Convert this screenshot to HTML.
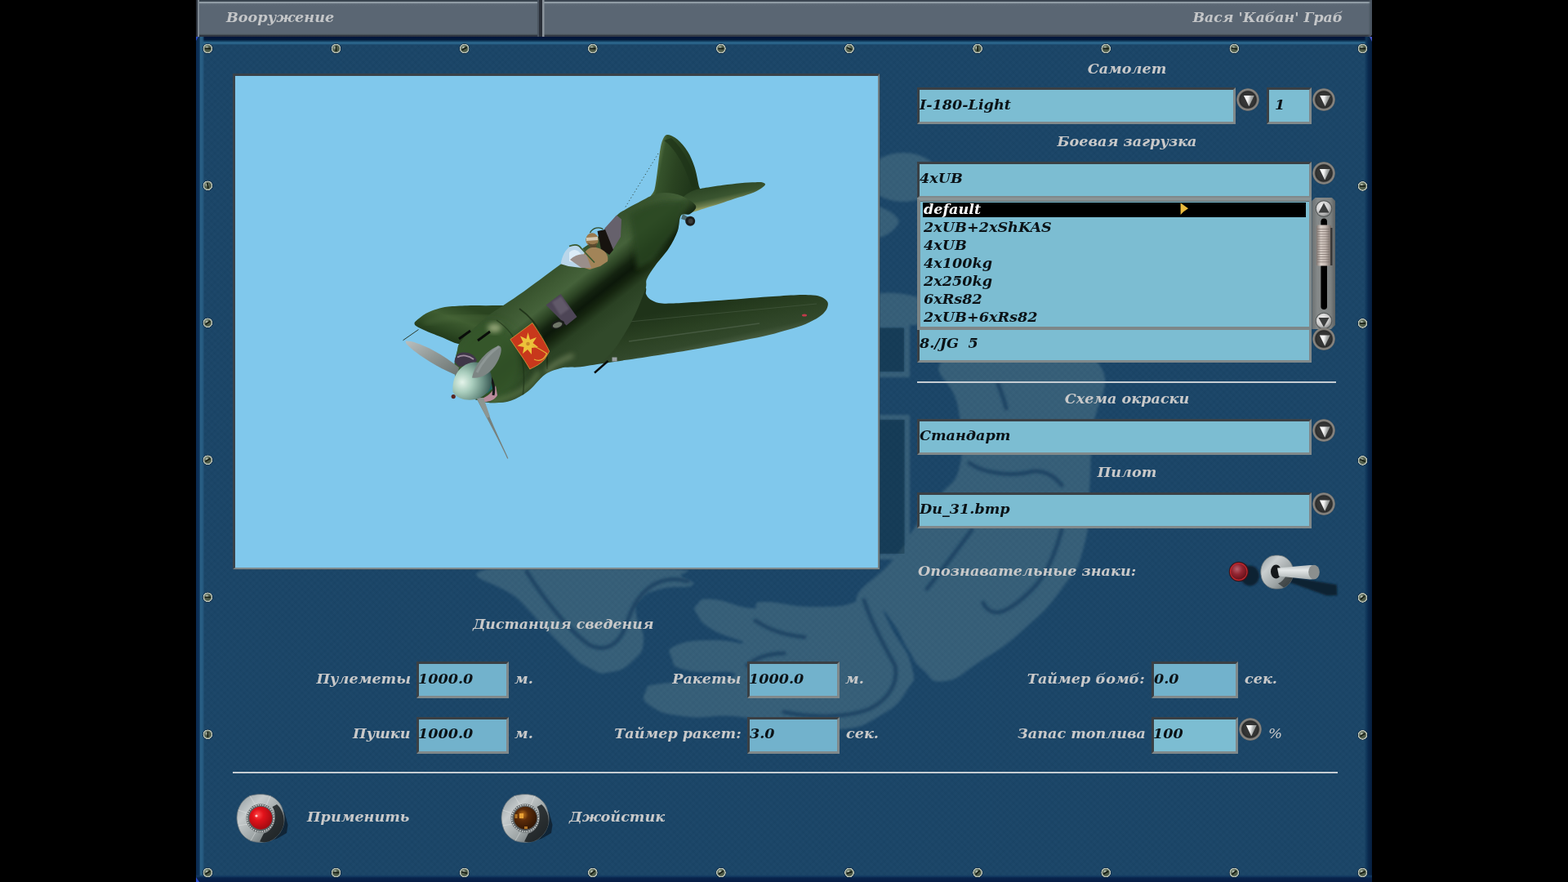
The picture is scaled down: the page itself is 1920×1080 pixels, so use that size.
<!DOCTYPE html>
<html lang="ru">
<head>
<meta charset="utf-8">
<title>Вооружение</title>
<style>
html,body{margin:0;padding:0;background:#000;}
body{width:1920px;height:1080px;position:relative;overflow:hidden;font-family:'DejaVu Serif','Liberation Serif',serif;}
div,svg{position:absolute;box-sizing:border-box;}
.t,.k{font:italic bold 16.6px/30px 'DejaVu Serif','Liberation Serif',serif;white-space:pre;height:30px;transform:scaleX(1.06);transform-origin:0 50%;}
.t{color:#c9c9c9;}
.k{color:#0b1216;}
#panel{left:240px;top:45px;width:1440px;height:1035px;background-color:#1b4668;
 background-image:
  repeating-linear-gradient(45deg,rgba(255,255,255,.008) 0 1.4px,rgba(0,0,0,0) 1.4px 2.8px,rgba(0,0,0,.022) 2.8px 4.2px,rgba(0,0,0,0) 4.2px 5.6px),
  repeating-linear-gradient(-45deg,rgba(255,255,255,.008) 0 1.4px,rgba(0,0,0,0) 1.4px 2.8px,rgba(0,0,0,.022) 2.8px 4.2px,rgba(0,0,0,0) 4.2px 5.6px);
 overflow:hidden;}
.bar{top:0;height:45px;background:linear-gradient(#38434e 0,#38434e 1.6px,#8f9ba4 2.4px,#8f9ba4 3.6px,#6a7682 4.4px,#5d6976 5.5px,#5a6673 8px,#5a6673 40.5px,#566369 42px,#2e3440 43.4px,#2a303c 45px);}
.fld{background:#7cbdd2;border-style:solid;border-width:3px;border-color:#3a4045 #80898b #80898b #3a4045;overflow:hidden;}
.fld .k{left:0;}
.dd{width:28px;height:28px;border-radius:50%;background:radial-gradient(circle at 50% 50%,#3a3a3a 0,#333434 8px,#2a2b2b 10.2px,#6f6d69 11.2px,#8d8a85 12.3px,#7d7b77 13.2px,rgba(70,75,78,.5) 14.2px);}
.dd:after{content:"";position:absolute;left:9.2px;top:9.4px;width:12.8px;height:13.4px;background:linear-gradient(100deg,#fff 0,#f2f2f2 38%,#a9acab 62%,#7b7e7d 100%);clip-path:polygon(0 0,100% 0,50% 100%);}
.hl{height:2.5px;background:#c5ccd2;}
</style>
</head>
<body>
<div id="panel">
<svg id="wm" style="left:0;top:0" width="1440" height="1035" viewBox="240 45 1440 1035">
<defs><filter id="wb" x="-5%" y="-5%" width="110%" height="110%"><feGaussianBlur stdDeviation="1.6"/></filter></defs>
<g fill="#e6ffe4" opacity=".135" filter="url(#wb)">
<path d="M600 696C554.13 706.93 613.73 711.13 638 737C662.27 762.87 668.6 771.4 691 793C713.4 814.6 707.07 810 722 818C736.93 826 732.87 825.4 747 823C761.13 820.6 764.07 819.4 775 809C785.93 798.6 786.93 799.2 788 784C789.07 768.8 779.8 765.33 779 752C778.2 738.67 776.73 742.27 785 734C793.27 725.73 793.47 725.53 810 721C826.53 716.47 840.33 721 847 717C853.67 713 844.87 711.6 835 706C825.13 700.4 872.67 698.67 810 696C747.33 693.33 645.87 685.07 600 696Z"/>
<path d="M853.8 740C858.79 735.01 855.01 732.55 872.5 733.8C889.99 735.05 902.73 743.87 919.4 744.7C936.07 745.53 914.17 737.35 935 736.9C955.83 736.45 967.5 743 997.5 743C1027.5 743 1030.83 742.77 1047.5 736.9C1064.17 731.03 1053.33 722.68 1060 721C1066.67 719.32 1064.23 718.07 1072.5 730.6C1080.77 743.13 1079.4 745.49 1091 768C1102.6 790.51 1110.93 794.2 1116 815C1121.07 835.8 1120.77 829.33 1110 846C1099.23 862.67 1097.25 864.97 1075.6 877.5C1053.95 890.03 1058.03 889.67 1028.8 893C999.57 896.33 999.33 894.13 966 890C932.67 885.87 937.13 880.83 903.8 877.5C870.47 874.17 869.35 880.83 841 877.5C812.65 874.17 810.83 873.4 797.5 865C784.17 856.6 787.67 853.47 791 846C794.33 838.53 788.27 840.25 810 837C831.73 833.75 849.17 837.27 872.5 833.8C895.83 830.33 905.9 827.41 897.5 824C889.1 820.59 861 825.91 841 821C821 816.09 825.75 813.87 822.5 805.6C819.25 797.33 815.47 795.81 828.8 790C842.13 784.19 850.85 784.6 872.5 783.8C894.15 783 910 790.41 910 787C910 783.59 887.49 780.2 872.5 771C857.51 761.8 858.79 760.77 853.8 752.5C848.81 744.23 848.81 744.99 853.8 740Z"/>
<path d="M1156 440C1176.53 421.87 1199.87 428.93 1250 430C1300.13 431.07 1320.8 416.53 1344 444C1367.2 471.47 1339.67 491.13 1337 533C1334.33 574.87 1336.67 564.47 1334 601C1331.33 637.53 1336.07 638 1327 670C1317.93 702 1320 693.8 1300 721C1280 748.2 1278.67 748.27 1252 772C1225.33 795.73 1225.33 793.47 1200 810C1174.67 826.53 1175.67 831.33 1157 834C1138.33 836.67 1142 830.4 1130 820C1118 809.6 1121.33 809.67 1112 795C1102.67 780.33 1104.87 779.13 1095 765C1085.13 750.87 1087.27 751.07 1075 742C1062.73 732.93 1043.93 746.2 1049 731C1054.07 715.8 1074 709.27 1094 685C1114 660.73 1109.07 660.53 1124 640C1138.93 619.47 1136.13 627.47 1150 608C1163.87 588.53 1169.87 596.33 1176 567C1182.13 537.67 1178.33 531.87 1173 498C1167.67 464.13 1135.47 458.13 1156 440Z"/>
<ellipse cx="1106" cy="217" rx="44" ry="30"/>
<path d="M1060 250 C1080 252 1096 260 1101 271 C1096 284 1082 292 1060 295Z"/>
<path d="M1060 362 C1085 356 1105 358 1124 364 L1124 398 L1060 398Z"/>
<path fill-rule="evenodd" d="M1060 396 L1114 396 L1114 462 L1060 462Z M1060 401.5 L1107 401.5 L1107 455 L1060 455Z"/>
<path fill-rule="evenodd" d="M1060 508 L1114 508 L1114 685 L1060 685Z M1060 514 L1107.5 514 L1107.5 678 L1060 678Z"/>
</g>
<path d="M1060 401.5 L1107 401.5 L1107 455 L1060 455Z M1060 514 L1107.5 514 L1107.5 678 L1060 678Z" fill="#0c2c3c" opacity=".38"/>
<g fill="none" stroke="#143c5e" stroke-width="5" opacity=".75" stroke-linecap="round" filter="url(#wb)">
<path d="M1187 567 C1205 580 1240 584 1265 577 C1280 576 1292 584 1300 594"/>
<path d="M1222 470 C1226 480 1230 490 1232 500"/>
<path d="M1190 649 C1180 662 1160 690 1135 721"/>
<path d="M1300 649 C1294 670 1286 695 1270 715 C1255 732 1235 748 1222 750 C1212 750 1206 744 1204 738"/>
<path d="M645 700 C670 740 700 775 722 790 C740 798 755 792 765 770 C772 750 778 730 800 716 C815 708 830 708 842 712"/>
<path d="M925 760 C940 770 960 778 985 780 M915 815 C925 806 940 800 960 800"/>
<path d="M1058 735 C1066 760 1082 790 1096 815 C1100 835 1090 855 1065 868 C1040 878 1000 880 960 872"/>
</g>
</svg>
<div style="left:0;top:0;width:1440px;height:10px;background:linear-gradient(#02143c 0,#031c3c 3.6px,#174568 5.6px,#2e6a90 7.4px,#245a80 9px,rgba(27,70,104,0) 10px);"></div>
<div style="left:0;top:0;width:11px;height:1035px;background:linear-gradient(90deg,#0a2a50 0,#0e3359 4px,#2a6085 5.5px,#265b81 8px,rgba(27,70,104,0) 10.5px);"></div>
<div style="right:0;top:0;width:9px;height:1035px;background:linear-gradient(270deg,#061e3e 0,#0a2a4e 4.5px,#11385c 7px,rgba(27,70,104,0) 9.5px);"></div>
<div style="left:0;bottom:0;width:1440px;height:9px;background:linear-gradient(0deg,#061c44 0,#08244c 5px,#123a62 7px,rgba(27,70,104,0) 9px);"></div>
<div style="left:0;bottom:0;width:4px;height:6px;background:#2a4ccc;clip-path:polygon(0 0,100% 100%,0 100%);z-index:2"></div>
<div style="left:0;top:0;width:3px;height:5px;background:#2a48c4;clip-path:polygon(0 0,100% 0,0 100%);z-index:2"></div>
<div style="right:0;top:0;width:3px;height:6px;background:#4a5ad0;clip-path:polygon(0 0,100% 0,100% 100%);z-index:2"></div>
</div>
<div class="bar" style="left:240px;top:0px;width:424px;height:45px;border-left:2px solid #2c333c;border-right:4px solid #2a3039;box-shadow:inset 2px 0 0 #7d8790,inset -2px 0 1px #4a5460;"></div>
<div class="bar" style="left:663.5px;top:0px;width:1016.5px;height:45px;box-shadow:inset 2.5px 0 0 #8a939b, inset -3px 0 2px #4a5460;border-radius:0 0 4px 0;"></div>
<div class="t" style="left:276.5px;top:6px;color:#c4c6c8;">Вооружение</div>
<div class="t" style="right:276px;transform-origin:100% 50%;top:6px;color:#c4c6c8;transform:scaleX(1.043);">Вася 'Кабан' Граб</div>
<svg id="screws" style="left:240px;top:45px" width="1440" height="1035" viewBox="240 45 1440 1035">
<defs><radialGradient id="sc1" cx=".5" cy=".5" r=".5"><stop offset="0" stop-color="#56644f"/><stop offset=".5" stop-color="#4a5745"/><stop offset=".62" stop-color="#7d8976"/><stop offset=".74" stop-color="#c4ccc2"/><stop offset=".8" stop-color="#b5beb3"/><stop offset=".86" stop-color="#0a2038" stop-opacity=".7"/><stop offset="1" stop-color="#0a2038" stop-opacity="0"/></radialGradient><radialGradient id="sc2" cx=".5" cy=".5" r=".5"><stop offset="0" stop-color="#e2e9e0" stop-opacity=".95"/><stop offset=".5" stop-color="#a9b5a6" stop-opacity=".55"/><stop offset="1" stop-color="#6a7766" stop-opacity="0"/></radialGradient></defs>
<g transform="translate(254.4 59.5)"><circle r="7" fill="url(#sc1)"/><circle cx="-1.1" cy="-1.2" r="3.4" fill="url(#sc2)"/><rect x="-3.6" y="-.9" width="7.2" height="1.8" rx=".8" fill="#161d15" transform="rotate(0)"/></g>
<g transform="translate(254.4 1068.5)"><circle r="7" fill="url(#sc1)"/><circle cx="-1.1" cy="-1.2" r="3.4" fill="url(#sc2)"/><rect x="-3.6" y="-.9" width="7.2" height="1.8" rx=".8" fill="#161d15" transform="rotate(-35)"/></g>
<g transform="translate(411.52 59.5)"><circle r="7" fill="url(#sc1)"/><circle cx="-1.1" cy="-1.2" r="3.4" fill="url(#sc2)"/><rect x="-3.6" y="-.9" width="7.2" height="1.8" rx=".8" fill="#161d15" transform="rotate(90)"/></g>
<g transform="translate(411.52 1068.5)"><circle r="7" fill="url(#sc1)"/><circle cx="-1.1" cy="-1.2" r="3.4" fill="url(#sc2)"/><rect x="-3.6" y="-.9" width="7.2" height="1.8" rx=".8" fill="#161d15" transform="rotate(0)"/></g>
<g transform="translate(568.64 59.5)"><circle r="7" fill="url(#sc1)"/><circle cx="-1.1" cy="-1.2" r="3.4" fill="url(#sc2)"/><rect x="-3.6" y="-.9" width="7.2" height="1.8" rx=".8" fill="#161d15" transform="rotate(-30)"/></g>
<g transform="translate(568.64 1068.5)"><circle r="7" fill="url(#sc1)"/><circle cx="-1.1" cy="-1.2" r="3.4" fill="url(#sc2)"/><rect x="-3.6" y="-.9" width="7.2" height="1.8" rx=".8" fill="#161d15" transform="rotate(15)"/></g>
<g transform="translate(725.76 59.5)"><circle r="7" fill="url(#sc1)"/><circle cx="-1.1" cy="-1.2" r="3.4" fill="url(#sc2)"/><rect x="-3.6" y="-.9" width="7.2" height="1.8" rx=".8" fill="#161d15" transform="rotate(0)"/></g>
<g transform="translate(725.76 1068.5)"><circle r="7" fill="url(#sc1)"/><circle cx="-1.1" cy="-1.2" r="3.4" fill="url(#sc2)"/><rect x="-3.6" y="-.9" width="7.2" height="1.8" rx=".8" fill="#161d15" transform="rotate(-40)"/></g>
<g transform="translate(882.88 59.5)"><circle r="7" fill="url(#sc1)"/><circle cx="-1.1" cy="-1.2" r="3.4" fill="url(#sc2)"/><rect x="-3.6" y="-.9" width="7.2" height="1.8" rx=".8" fill="#161d15" transform="rotate(0)"/></g>
<g transform="translate(882.88 1068.5)"><circle r="7" fill="url(#sc1)"/><circle cx="-1.1" cy="-1.2" r="3.4" fill="url(#sc2)"/><rect x="-3.6" y="-.9" width="7.2" height="1.8" rx=".8" fill="#161d15" transform="rotate(-35)"/></g>
<g transform="translate(1040 59.5)"><circle r="7" fill="url(#sc1)"/><circle cx="-1.1" cy="-1.2" r="3.4" fill="url(#sc2)"/><rect x="-3.6" y="-.9" width="7.2" height="1.8" rx=".8" fill="#161d15" transform="rotate(25)"/></g>
<g transform="translate(1040 1068.5)"><circle r="7" fill="url(#sc1)"/><circle cx="-1.1" cy="-1.2" r="3.4" fill="url(#sc2)"/><rect x="-3.6" y="-.9" width="7.2" height="1.8" rx=".8" fill="#161d15" transform="rotate(-20)"/></g>
<g transform="translate(1197.12 59.5)"><circle r="7" fill="url(#sc1)"/><circle cx="-1.1" cy="-1.2" r="3.4" fill="url(#sc2)"/><rect x="-3.6" y="-.9" width="7.2" height="1.8" rx=".8" fill="#161d15" transform="rotate(90)"/></g>
<g transform="translate(1197.12 1068.5)"><circle r="7" fill="url(#sc1)"/><circle cx="-1.1" cy="-1.2" r="3.4" fill="url(#sc2)"/><rect x="-3.6" y="-.9" width="7.2" height="1.8" rx=".8" fill="#161d15" transform="rotate(-45)"/></g>
<g transform="translate(1354.24 59.5)"><circle r="7" fill="url(#sc1)"/><circle cx="-1.1" cy="-1.2" r="3.4" fill="url(#sc2)"/><rect x="-3.6" y="-.9" width="7.2" height="1.8" rx=".8" fill="#161d15" transform="rotate(0)"/></g>
<g transform="translate(1354.24 1068.5)"><circle r="7" fill="url(#sc1)"/><circle cx="-1.1" cy="-1.2" r="3.4" fill="url(#sc2)"/><rect x="-3.6" y="-.9" width="7.2" height="1.8" rx=".8" fill="#161d15" transform="rotate(-30)"/></g>
<g transform="translate(1511.36 59.5)"><circle r="7" fill="url(#sc1)"/><circle cx="-1.1" cy="-1.2" r="3.4" fill="url(#sc2)"/><rect x="-3.6" y="-.9" width="7.2" height="1.8" rx=".8" fill="#161d15" transform="rotate(10)"/></g>
<g transform="translate(1511.36 1068.5)"><circle r="7" fill="url(#sc1)"/><circle cx="-1.1" cy="-1.2" r="3.4" fill="url(#sc2)"/><rect x="-3.6" y="-.9" width="7.2" height="1.8" rx=".8" fill="#161d15" transform="rotate(-38)"/></g>
<g transform="translate(1668.48 59.5)"><circle r="7" fill="url(#sc1)"/><circle cx="-1.1" cy="-1.2" r="3.4" fill="url(#sc2)"/><rect x="-3.6" y="-.9" width="7.2" height="1.8" rx=".8" fill="#161d15" transform="rotate(0)"/></g>
<g transform="translate(1668.48 1068.5)"><circle r="7" fill="url(#sc1)"/><circle cx="-1.1" cy="-1.2" r="3.4" fill="url(#sc2)"/><rect x="-3.6" y="-.9" width="7.2" height="1.8" rx=".8" fill="#161d15" transform="rotate(-25)"/></g>
<g transform="translate(254.4 227.3)"><circle r="7" fill="url(#sc1)"/><circle cx="-1.1" cy="-1.2" r="3.4" fill="url(#sc2)"/><rect x="-3.6" y="-.9" width="7.2" height="1.8" rx=".8" fill="#161d15" transform="rotate(80)"/></g>
<g transform="translate(1668.5 227.9)"><circle r="7" fill="url(#sc1)"/><circle cx="-1.1" cy="-1.2" r="3.4" fill="url(#sc2)"/><rect x="-3.6" y="-.9" width="7.2" height="1.8" rx=".8" fill="#161d15" transform="rotate(0)"/></g>
<g transform="translate(254.4 395.3)"><circle r="7" fill="url(#sc1)"/><circle cx="-1.1" cy="-1.2" r="3.4" fill="url(#sc2)"/><rect x="-3.6" y="-.9" width="7.2" height="1.8" rx=".8" fill="#161d15" transform="rotate(-35)"/></g>
<g transform="translate(1668.5 395.9)"><circle r="7" fill="url(#sc1)"/><circle cx="-1.1" cy="-1.2" r="3.4" fill="url(#sc2)"/><rect x="-3.6" y="-.9" width="7.2" height="1.8" rx=".8" fill="#161d15" transform="rotate(0)"/></g>
<g transform="translate(254.4 563.3)"><circle r="7" fill="url(#sc1)"/><circle cx="-1.1" cy="-1.2" r="3.4" fill="url(#sc2)"/><rect x="-3.6" y="-.9" width="7.2" height="1.8" rx=".8" fill="#161d15" transform="rotate(-30)"/></g>
<g transform="translate(1668.5 563.9)"><circle r="7" fill="url(#sc1)"/><circle cx="-1.1" cy="-1.2" r="3.4" fill="url(#sc2)"/><rect x="-3.6" y="-.9" width="7.2" height="1.8" rx=".8" fill="#161d15" transform="rotate(20)"/></g>
<g transform="translate(254.4 731.3)"><circle r="7" fill="url(#sc1)"/><circle cx="-1.1" cy="-1.2" r="3.4" fill="url(#sc2)"/><rect x="-3.6" y="-.9" width="7.2" height="1.8" rx=".8" fill="#161d15" transform="rotate(0)"/></g>
<g transform="translate(1668.5 731.9)"><circle r="7" fill="url(#sc1)"/><circle cx="-1.1" cy="-1.2" r="3.4" fill="url(#sc2)"/><rect x="-3.6" y="-.9" width="7.2" height="1.8" rx=".8" fill="#161d15" transform="rotate(-40)"/></g>
<g transform="translate(254.4 899.3)"><circle r="7" fill="url(#sc1)"/><circle cx="-1.1" cy="-1.2" r="3.4" fill="url(#sc2)"/><rect x="-3.6" y="-.9" width="7.2" height="1.8" rx=".8" fill="#161d15" transform="rotate(90)"/></g>
<g transform="translate(1668.5 899.9)"><circle r="7" fill="url(#sc1)"/><circle cx="-1.1" cy="-1.2" r="3.4" fill="url(#sc2)"/><rect x="-3.6" y="-.9" width="7.2" height="1.8" rx=".8" fill="#161d15" transform="rotate(-30)"/></g>
</svg>
<div style="left:285px;top:90px;width:792px;height:607px;background:#80c8ec;border-style:solid;border-width:3px 2px 2px 3px;border-color:#39424a #6f7d81 #7e8a8d #39424a;box-shadow:1px 1px 0 rgba(60,75,85,.45);"></div>
<svg id="plane" style="left:288px;top:93px" width="787" height="602" viewBox="288 93 787 602">
<defs>
<filter id="b1" x="-30%" y="-30%" width="160%" height="160%"><feGaussianBlur stdDeviation="1.2"/></filter>
<filter id="b3" x="-30%" y="-30%" width="160%" height="160%"><feGaussianBlur stdDeviation="3"/></filter>
<filter id="b6" x="-40%" y="-40%" width="180%" height="180%"><feGaussianBlur stdDeviation="6"/></filter>
<linearGradient id="gfus" gradientUnits="userSpaceOnUse" x1="668" y1="335" x2="730" y2="414"><stop offset="0" stop-color="#36512c"/><stop offset=".15" stop-color="#3e5a33"/><stop offset=".3" stop-color="#45623a"/><stop offset=".42" stop-color="#2c4424"/><stop offset=".52" stop-color="#142310"/><stop offset=".6" stop-color="#0c180a"/><stop offset=".68" stop-color="#15250f"/><stop offset=".8" stop-color="#2a4123"/><stop offset="1" stop-color="#31492a"/></linearGradient>
<linearGradient id="grw" gradientUnits="userSpaceOnUse" x1="900" y1="362" x2="912" y2="418"><stop offset="0" stop-color="#1f3319"/><stop offset=".45" stop-color="#2a4022"/><stop offset=".82" stop-color="#32482b"/><stop offset="1" stop-color="#485d41"/></linearGradient>
<linearGradient id="glw" gradientUnits="userSpaceOnUse" x1="560" y1="372" x2="545" y2="415"><stop offset="0" stop-color="#2a4420"/><stop offset=".4" stop-color="#3f5d31"/><stop offset=".75" stop-color="#2e4a24"/><stop offset="1" stop-color="#223a1a"/></linearGradient>
<linearGradient id="gfin" gradientUnits="userSpaceOnUse" x1="802" y1="205" x2="852" y2="215"><stop offset="0" stop-color="#5d7a4a"/><stop offset=".15" stop-color="#35522b"/><stop offset=".5" stop-color="#2a4321"/><stop offset="1" stop-color="#1f3519"/></linearGradient>
<linearGradient id="gst" gradientUnits="userSpaceOnUse" x1="885" y1="225" x2="890" y2="249"><stop offset="0" stop-color="#2c4524"/><stop offset=".6" stop-color="#3a5530"/><stop offset=".9" stop-color="#6d7f4f"/><stop offset="1" stop-color="#8f9a5e"/></linearGradient>
<radialGradient id="gsp" gradientUnits="userSpaceOnUse" cx="566" cy="468" r="36"><stop offset="0" stop-color="#e4f4ea"/><stop offset=".35" stop-color="#a9cdbd"/><stop offset=".7" stop-color="#6f9488"/><stop offset="1" stop-color="#3a5a55"/></radialGradient>
<linearGradient id="gbl" x1="0" y1="0" x2="1" y2="1"><stop offset="0" stop-color="#b9bfbf"/><stop offset=".5" stop-color="#8e9694"/><stop offset="1" stop-color="#6a726f"/></linearGradient>
<clipPath id="cfus"><path d="M560 429C561.08 424.33 560.5 423.67 563 420C565.5 416.33 569.5 412.33 575 407C580.5 401.67 589 393.58 596 388C603 382.42 609.38 378.72 617 373.5C624.62 368.28 633.42 362.57 641.7 356.7C649.98 350.83 659.2 343.83 666.7 338.3C674.2 332.77 680.32 328.22 686.7 323.5C693.08 318.78 698.62 314.58 705 310C711.38 305.42 719.17 300.67 725 296C730.83 291.33 735 287.33 740 282C745 276.67 750.55 268.33 755 264C759.45 259.67 762.25 258.67 766.7 256C771.15 253.33 776.08 250.92 781.7 248C787.32 245.08 794.85 240.5 800.4 238.5C805.95 236.5 809.23 235.75 815 236C820.77 236.25 828.83 237.33 835 240C841.17 242.67 850.33 248.33 852 252C853.67 255.67 848.03 260 845 262C841.97 264 836.37 260.45 833.8 264C831.23 267.55 832.07 276.63 829.6 283.3C827.13 289.97 823.52 297.05 819 304C814.48 310.95 807 318.72 802.5 325C798 331.28 794.17 336.48 792 341.7C789.83 346.92 793.17 346.58 789.5 356.3C785.83 366.02 778.25 386.05 770 400C761.75 413.95 751.67 431.83 740 440C728.33 448.17 708.67 447.25 700 449C691.33 450.75 693.42 448.92 688 450.5C682.58 452.08 674.38 453.75 667.5 458.5C660.62 463.25 653.65 473.67 646.7 479C639.75 484.33 632.58 488.13 625.8 490.5C619.02 492.87 611.97 493.03 606 493.2C600.03 493.37 595.67 493.03 590 491.5C584.33 489.97 577 487.92 572 484C567 480.08 562.58 474 560 468C557.42 462 556.5 454.5 556.5 448C556.5 441.5 558.92 433.67 560 429Z"/></clipPath>
<clipPath id="crw"><path d="M789.6 352C793.1 352.83 789.93 357.58 791 360C792.07 362.42 793.38 364.67 796 366.5C798.62 368.33 802.33 370.15 806.7 371C811.07 371.85 815.32 371.77 822.2 371.6C829.08 371.43 839.1 370.57 848 370C856.9 369.43 865.27 368.92 875.6 368.2C885.93 367.48 898.9 366.52 910 365.7C921.1 364.88 931.27 364.05 942.2 363.3C953.13 362.55 966.7 361.48 975.6 361.2C984.5 360.92 990.53 361.17 995.6 361.6C1000.67 362.03 1003.18 362.65 1006 363.8C1008.82 364.95 1011.2 366.88 1012.5 368.5C1013.8 370.12 1014.05 371.5 1013.8 373.5C1013.55 375.5 1012.8 378.08 1011 380.5C1009.2 382.92 1007.05 385.3 1003 388C998.95 390.7 993.03 394.07 986.7 396.7C980.37 399.33 972.42 401.58 965 403.8C957.58 406.02 951.37 407.83 942.2 410C933.03 412.17 921.1 414.58 910 416.8C898.9 419.02 887.27 421.18 875.6 423.3C863.93 425.42 851.12 427.65 840 429.5C828.88 431.35 821.5 432.47 808.9 434.4C796.3 436.33 776.72 439.25 764.4 441.1C752.08 442.95 745.73 444.1 735 445.5C724.27 446.9 709.17 450.42 700 449.5C690.83 448.58 680 448.25 680 440C680 431.75 690 411.67 700 400C710 388.33 728.33 377.5 740 370C751.67 362.5 761.73 358 770 355C778.27 352 786.1 351.17 789.6 352Z"/></clipPath>
</defs>
<path d="M806 188 L765.5 254" stroke="#26331f" stroke-width="1" stroke-dasharray="1 3.2" fill="none"/>
<path d="M493.5 416.7 L512.5 403.5" stroke="#2a3a2a" stroke-width="1" fill="none"/>
<path d="M836 262 L843 266 L840 270 L834 268Z" fill="#4a6a70"/><circle cx="845.2" cy="270.8" r="6" fill="#1b1d1c"/><circle cx="845.6" cy="270.8" r="3" fill="#3a3d3c"/>
<path d="M797 243C794.75 240 800.23 237.08 801.5 232C802.77 226.92 803.4 220.92 804.6 212.5C805.8 204.08 807.33 188.83 808.7 181.5C810.07 174.17 811.25 171.25 812.8 168.5C814.35 165.75 815.2 164.62 818 165C820.8 165.38 825.6 167.4 829.6 170.8C833.6 174.2 838.53 179.83 842 185.4C845.47 190.97 848.13 197.27 850.4 204.2C852.67 211.13 854.5 221.7 855.6 227C856.7 232.3 859.6 232.17 857 236C854.4 239.83 847 247.67 840 250C833 252.33 822.17 251.17 815 250C807.83 248.83 799.25 246 797 243Z" fill="url(#gfin)"/>
<path d="M813 172 C825 180 838 200 847 229 L853 228 C848 204 838 184 822 169Z" fill="#1e3318" opacity=".7"/>
<path d="M838 240C841.33 236.83 846 234.62 850 233C854 231.38 856.17 231.33 862 230.3C867.83 229.27 877.55 227.82 885 226.8C892.45 225.78 900.03 224.8 906.7 224.2C913.37 223.6 920.45 223.32 925 223.2C929.55 223.08 932 223.03 934 223.5C936 223.97 937.17 224.92 937 226C936.83 227.08 935.28 228.43 933 230C930.72 231.57 927.97 233.47 923.3 235.4C918.63 237.33 911.25 239.52 905 241.6C898.75 243.68 891.97 245.92 885.8 247.9C879.63 249.88 873.55 251.73 868 253.5C862.45 255.27 857.17 257.08 852.5 258.5C847.83 259.92 843.42 261.58 840 262C836.58 262.42 833.67 262.67 832 261C830.33 259.33 829 255.5 830 252C831 248.5 834.67 243.17 838 240Z" fill="url(#gst)"/>
<path d="M789.6 352C793.1 352.83 789.93 357.58 791 360C792.07 362.42 793.38 364.67 796 366.5C798.62 368.33 802.33 370.15 806.7 371C811.07 371.85 815.32 371.77 822.2 371.6C829.08 371.43 839.1 370.57 848 370C856.9 369.43 865.27 368.92 875.6 368.2C885.93 367.48 898.9 366.52 910 365.7C921.1 364.88 931.27 364.05 942.2 363.3C953.13 362.55 966.7 361.48 975.6 361.2C984.5 360.92 990.53 361.17 995.6 361.6C1000.67 362.03 1003.18 362.65 1006 363.8C1008.82 364.95 1011.2 366.88 1012.5 368.5C1013.8 370.12 1014.05 371.5 1013.8 373.5C1013.55 375.5 1012.8 378.08 1011 380.5C1009.2 382.92 1007.05 385.3 1003 388C998.95 390.7 993.03 394.07 986.7 396.7C980.37 399.33 972.42 401.58 965 403.8C957.58 406.02 951.37 407.83 942.2 410C933.03 412.17 921.1 414.58 910 416.8C898.9 419.02 887.27 421.18 875.6 423.3C863.93 425.42 851.12 427.65 840 429.5C828.88 431.35 821.5 432.47 808.9 434.4C796.3 436.33 776.72 439.25 764.4 441.1C752.08 442.95 745.73 444.1 735 445.5C724.27 446.9 709.17 450.42 700 449.5C690.83 448.58 680 448.25 680 440C680 431.75 690 411.67 700 400C710 388.33 728.33 377.5 740 370C751.67 362.5 761.73 358 770 355C778.27 352 786.1 351.17 789.6 352Z" fill="url(#grw)"/>
<g clip-path="url(#crw)"><path d="M760 395 L1000 372" stroke="#4a5d44" stroke-width="1" opacity=".6" fill="none"/><path d="M770 418 L930 396" stroke="#5a6b55" stroke-width="1.5" opacity=".55" fill="none"/><ellipse cx="985" cy="386" rx="3" ry="1.5" fill="#c23a4a"/></g>
<path d="M561 421C554.75 419.92 549.05 416.13 542.5 413.5C535.95 410.87 527.12 407.53 521.7 405.2C516.28 402.87 512.37 401.03 510 399.5C507.63 397.97 507.5 397.17 507.5 396C507.5 394.83 507.63 394.53 510 392.5C512.37 390.47 517.53 386.13 521.7 383.8C525.87 381.47 530.48 379.88 535 378.5C539.52 377.12 542.63 376.22 548.8 375.5C554.97 374.78 564.37 374.42 572 374.2C579.63 373.98 586.6 374.15 594.6 374.2C602.6 374.25 612.43 373.53 620 374.5C627.57 375.47 641.67 375.75 640 380C638.33 384.25 620 393.33 610 400C600 406.67 588.17 416.5 580 420C571.83 423.5 567.25 422.08 561 421Z" fill="url(#glw)"/>
<path d="M520 396 C540 388 580 386 612 390" stroke="#5b7a49" stroke-width="5" opacity=".35" fill="none" filter="url(#b3)"/>
<path d="M560 429C561.08 424.33 560.5 423.67 563 420C565.5 416.33 569.5 412.33 575 407C580.5 401.67 589 393.58 596 388C603 382.42 609.38 378.72 617 373.5C624.62 368.28 633.42 362.57 641.7 356.7C649.98 350.83 659.2 343.83 666.7 338.3C674.2 332.77 680.32 328.22 686.7 323.5C693.08 318.78 698.62 314.58 705 310C711.38 305.42 719.17 300.67 725 296C730.83 291.33 735 287.33 740 282C745 276.67 750.55 268.33 755 264C759.45 259.67 762.25 258.67 766.7 256C771.15 253.33 776.08 250.92 781.7 248C787.32 245.08 794.85 240.5 800.4 238.5C805.95 236.5 809.23 235.75 815 236C820.77 236.25 828.83 237.33 835 240C841.17 242.67 850.33 248.33 852 252C853.67 255.67 848.03 260 845 262C841.97 264 836.37 260.45 833.8 264C831.23 267.55 832.07 276.63 829.6 283.3C827.13 289.97 823.52 297.05 819 304C814.48 310.95 807 318.72 802.5 325C798 331.28 794.17 336.48 792 341.7C789.83 346.92 793.17 346.58 789.5 356.3C785.83 366.02 778.25 386.05 770 400C761.75 413.95 751.67 431.83 740 440C728.33 448.17 708.67 447.25 700 449C691.33 450.75 693.42 448.92 688 450.5C682.58 452.08 674.38 453.75 667.5 458.5C660.62 463.25 653.65 473.67 646.7 479C639.75 484.33 632.58 488.13 625.8 490.5C619.02 492.87 611.97 493.03 606 493.2C600.03 493.37 595.67 493.03 590 491.5C584.33 489.97 577 487.92 572 484C567 480.08 562.58 474 560 468C557.42 462 556.5 454.5 556.5 448C556.5 441.5 558.92 433.67 560 429Z" fill="url(#gfus)"/>
<g clip-path="url(#cfus)">
<ellipse cx="598" cy="444" rx="44" ry="50" fill="#35562a" filter="url(#b6)" opacity=".9"/>
<ellipse cx="605.5" cy="401.5" rx="8.5" ry="5.5" fill="#a3b183" filter="url(#b3)" opacity=".85"/>
<path d="M660 455 C650 475 630 487 600 492" stroke="#6d8a55" stroke-width="6" fill="none" opacity=".6" filter="url(#b3)"/>
<path d="M636 378 C660 395 672 420 670 452" stroke="#1a2c14" stroke-width="2" fill="none" opacity=".8"/>
<path d="M608 392 C635 410 646 440 640 486" stroke="#1c3016" stroke-width="1.5" fill="none" opacity=".6"/>
<path d="M668 456 C676 447 688 440 702 435" stroke="#93a374" stroke-width="5" fill="none" opacity=".6" filter="url(#b3)"/>
<path d="M770 262 C790 250 810 244 840 246 L830 280 L800 320 L780 330Z" fill="#2c4724" opacity=".85" filter="url(#b3)"/>
</g>
<path d="M668.5 373.5 L686.5 360 L706.5 388 L693.5 398.5Z" fill="#4d4556"/><path d="M676 370 L687 363 L697 378 L686 386Z" fill="#6b6272" opacity=".7" filter="url(#b1)"/>
<ellipse cx="683" cy="397.5" rx="8.5" ry="5" transform="rotate(-18 683 397.5)" fill="#1a1e1a"/><ellipse cx="682.5" cy="397.8" rx="6" ry="3.2" transform="rotate(-18 683 397.5)" fill="#6f7668"/>
<path d="M562 415 L576 405" stroke="#0a0d0a" stroke-width="3"/><path d="M585 417 L600 406" stroke="#0a0d0a" stroke-width="3"/>
<path d="M728 456.5 L744.5 442" stroke="#0a0d0a" stroke-width="2.4"/><rect x="749.5" y="437.5" width="6" height="5" fill="#9aa0a4"/>
<path d="M624.8 415.6 L651.9 395.4 C660 407 668 420 672.7 430.2 L668.5 437.5 C664 445 655 449 648.8 452 L642.5 441.7Z" fill="#c8381c" stroke="#d9a13a" stroke-width=".8"/>
<path d="M646.5 407 L649 416 L657 413 L652.5 420 L659 425 L651 426 L651 434 L646 428 L640 433 L641.5 425 L633.5 423.5 L640.5 419 L637 411.5 L644.5 415Z" fill="#ecc23a"/><path d="M652 423 C660 427 667 431 669.5 433 C666 441 660 443 654 440" stroke="#e3b437" stroke-width="1.3" fill="none"/><circle cx="646.5" cy="421" r="2.3" fill="#c98a2a"/>
<path d="M740 280 L755 263.5 L761 268.5 L760 290 L750 306.5Z" fill="#66616c"/>
<path d="M731.5 283 L741 281 L751 306 L746 312 L736 305Z" fill="#17130f"/>
<path d="M686.7 323.3 C688 314 692 305 700 300.8 L708.3 300.8 C713 303 718 310 722 318 L712 328 L696 326Z" fill="#b9d6ea"/><path d="M697 309 C702 304 708 305 712 312 L704 321 L697 320Z" fill="#e4f1fb" opacity=".8"/>
<path d="M713 316 C716 306 722 302 730 303 C740 305 746 312 744 320 L735 326 L722 330 L712 327Z" fill="#a28458"/><path d="M698 318 C704 312 712 310 718 312 L724 328 L712 328Z" fill="#9a8e8a"/>
<ellipse cx="725" cy="293.5" rx="7.8" ry="8.3" fill="#9a7a4e"/><path d="M718 291 L732 290 L732 294 L718 295Z" fill="#d2c8b2"/><path d="M720 297 C723 300 728 300 731 297 L730 303 L722 303Z" fill="#5a4a2e"/>
<path d="M722.5 285 C726 278.5 734 277.5 738.5 280.5" stroke="#2f4a28" stroke-width="1.4" fill="none"/><path d="M697 301.5 C704 298.5 709 299.5 712 304.5 L728 321.5" stroke="#3a5a30" stroke-width="1.6" fill="none"/>
<path d="M556.5 443 C557 437 560 433 564 432 C572 430.5 580 433 584 441 L580 447 L562 449Z" fill="#3f3648"/><path d="M560 437.5 C566 434 574 435 580 440" stroke="#bfa8bc" stroke-width="1.8" fill="none" opacity=".75"/>
<path d="M590 488 C596 486 604 480 607 472 L609 484 C606 490 598 492.5 592 492Z" fill="#b98a9a"/>
<path d="M588 456 C595 458 602 466 603 476 L596 482 L590 470Z" fill="#1f6a66"/><path d="M597 458 C604 464 606 476 604 484" stroke="#15181a" stroke-width="3" fill="none"/>
<path d="M496.5 417.6 C508 417 535 428 562 450 L560 460 C540 452 512 436 497.5 421Z" fill="url(#gbl)"/>
<path d="M584 487.5 C590 500 610 535 621.8 561.5 C616 548 598 512 590.5 488Z" fill="#77807c" stroke="#77807c" stroke-width="1.2"/><path d="M584 487.5 L592 487 L600 510 L596 512Z" fill="#8d9692"/>
<path d="M554.5 480 C553 462 562 446 580 443.5 C592 443 601 450 602 462 C603 475 596 486 582 489 C572 491 560 489 554.5 480Z" fill="url(#gsp)"/>
<path d="M578 462.5 C581 446 596 428 611 423.5 C616 424 614 436 606 448 C598 459 588 464 578 462.5Z" fill="#7d8684"/><path d="M584 456 C590 444 600 432 611 424" stroke="#9aa3a1" stroke-width="3" fill="none" opacity=".6"/>
<circle cx="555.2" cy="485.6" r="2.6" fill="#5a2420"/>
</svg>
<div class="t" style="left:1079.5px;width:600px;text-align:center;transform-origin:50% 50%;top:68.5px;">Самолет</div>
<div class="fld" style="left:1123px;top:107px;width:390px;height:45px;"><div class="k" style="left:-0.1px;top:2.7px;">I-180-Light</div></div>
<div class="dd" style="left:1513.8px;top:107.5px"></div>
<div class="fld" style="left:1551px;top:107px;width:55px;height:45px;"><div class="k" style="left:6.5px;top:2.7px;">1</div></div>
<div class="dd" style="left:1607px;top:107.5px"></div>
<div class="t" style="left:1079.5px;width:600px;text-align:center;transform-origin:50% 50%;top:158.3px;">Боевая загрузка</div>
<div class="fld" style="left:1123px;top:197.5px;width:483px;height:45px;"><div class="k" style="left:-0.1px;top:2.3px;">4xUB</div></div>
<div class="dd" style="left:1606.7px;top:197.7px"></div>
<div class="fld" style="left:1123px;top:399.5px;width:483px;height:44.5px;"><div class="k" style="left:-0.1px;top:2.2px;word-spacing:5px">8./JG 5</div></div>
<div id="list" style="left:1123px;top:242px;width:483px;height:162px;background:#7cbdd2;border-style:solid;border-width:4px 3.5px 4px 4px;border-color:#8a9496 #808a8c #7d8789 #7a8486;box-shadow:inset 0 1px 0 #5f686a;">
<div style="left:3px;top:2px;width:469px;height:18px;background:#000"></div>
<div class="k" style="left:3.5px;top:-5px;color:#fff">default</div>
<div class="k" style="left:3.5px;top:17px;color:#0b1216">2xUB+2xShKAS</div>
<div class="k" style="left:3.5px;top:39px;color:#0b1216">4xUB</div>
<div class="k" style="left:3.5px;top:61px;color:#0b1216">4x100kg</div>
<div class="k" style="left:3.5px;top:83px;color:#0b1216">2x250kg</div>
<div class="k" style="left:3.5px;top:105px;color:#0b1216">6xRs82</div>
<div class="k" style="left:3.5px;top:127px;color:#0b1216">2xUB+6xRs82</div>
</div>
<svg style="left:1444px;top:247px" width="14" height="18" viewBox="0 0 14 18"><path d="M1.6 1.5 L1.6 16 L5.2 12.2 L11 8.2 Z" fill="#e9ba3d"/></svg>
<svg style="left:1604px;top:240px" width="34" height="166" viewBox="1604 240 34 166">
<defs><linearGradient id="sbg" x1="0" x2="1" y1="0" y2="0"><stop offset="0" stop-color="#6b7071"/><stop offset=".25" stop-color="#868a8a"/><stop offset=".8" stop-color="#7d8181"/><stop offset="1" stop-color="#5c6162"/></linearGradient><linearGradient id="thg" x1="0" x2="1" y1="0" y2="0"><stop offset="0" stop-color="#7c736f"/><stop offset=".3" stop-color="#d9cfc8"/><stop offset=".6" stop-color="#c4b8b1"/><stop offset="1" stop-color="#6f6661"/></linearGradient><radialGradient id="btg" cx=".4" cy=".35" r=".75"><stop offset="0" stop-color="#f4f4f4"/><stop offset=".6" stop-color="#c9c9c9"/><stop offset="1" stop-color="#6d6f6f"/></radialGradient></defs>
<path d="M1606.3 246 L1610.5 242 L1631 242 L1635 246 L1635 398 L1630 403 L1606.3 403 Z" fill="url(#sbg)"/>
<rect x="1617.4" y="267.5" width="7.6" height="111.5" rx="3.8" fill="#000"/>
<rect x="1611.8" y="275.5" width="18.4" height="50" rx="2.5" fill="url(#thg)"/>
<rect x="1629.2" y="279" width="2.3" height="46" fill="#1d1f20" opacity=".75"/>
<rect x="1613" y="280" width="15.5" height="1" fill="#7a6f69" opacity=".7"/><rect x="1613" y="283.1" width="15.5" height="1" fill="#7a6f69" opacity=".7"/><rect x="1613" y="286.2" width="15.5" height="1" fill="#7a6f69" opacity=".7"/><rect x="1613" y="289.3" width="15.5" height="1" fill="#7a6f69" opacity=".7"/><rect x="1613" y="292.4" width="15.5" height="1" fill="#7a6f69" opacity=".7"/><rect x="1613" y="295.5" width="15.5" height="1" fill="#7a6f69" opacity=".7"/><rect x="1613" y="298.6" width="15.5" height="1" fill="#7a6f69" opacity=".7"/><rect x="1613" y="301.7" width="15.5" height="1" fill="#7a6f69" opacity=".7"/><rect x="1613" y="304.8" width="15.5" height="1" fill="#7a6f69" opacity=".7"/><rect x="1613" y="307.9" width="15.5" height="1" fill="#7a6f69" opacity=".7"/><rect x="1613" y="311" width="15.5" height="1" fill="#7a6f69" opacity=".7"/><rect x="1613" y="314.1" width="15.5" height="1" fill="#7a6f69" opacity=".7"/><rect x="1613" y="317.2" width="15.5" height="1" fill="#7a6f69" opacity=".7"/><rect x="1613" y="320.3" width="15.5" height="1" fill="#7a6f69" opacity=".7"/>
<circle cx="1621" cy="255.6" r="10.3" fill="#4f5353"/><circle cx="1621" cy="255.6" r="9.3" fill="url(#btg)"/><path d="M1614.5 260.5 L1627.5 260.5 L1621 248.5 Z" fill="#3c3e3e"/>
<circle cx="1621" cy="393" r="10.3" fill="#4f5353"/><circle cx="1621" cy="393" r="9.3" fill="url(#btg)"/><path d="M1614.5 389 L1627.5 389 L1621 400.5 Z" fill="#3c3e3e"/>
</svg>
<div class="dd" style="left:1606.7px;top:401px"></div>
<div class="hl" style="left:1123px;top:466.8px;width:512.5px;height:2.5px;"></div>
<div class="t" style="left:1079.5px;width:600px;text-align:center;transform-origin:50% 50%;top:472.8px;">Схема окраски</div>
<div class="fld" style="left:1123px;top:512.5px;width:483px;height:44.5px;"><div class="k" style="left:-0.1px;top:2.2px;">Стандарт</div></div>
<div class="dd" style="left:1606.7px;top:513px"></div>
<div class="t" style="left:1079.5px;width:600px;text-align:center;transform-origin:50% 50%;top:562.6px;">Пилот</div>
<div class="fld" style="left:1123px;top:602.5px;width:483px;height:44.5px;"><div class="k" style="left:-0.1px;top:2px;">Du_31.bmp</div></div>
<div class="dd" style="left:1606.7px;top:603px"></div>
<div class="t" style="left:1123.5px;top:684px;">Опознавательные знаки:</div>
<svg style="left:1496px;top:672px" width="150" height="62" viewBox="1496 672 150 62">
<defs><radialGradient id="lamp" cx=".4" cy=".35" r=".7"><stop offset="0" stop-color="#b8606c"/><stop offset=".45" stop-color="#932430"/><stop offset="1" stop-color="#5e0e16"/></radialGradient><linearGradient id="nut" x1="0" y1="0" x2="1" y2="1"><stop offset="0" stop-color="#8d979b"/><stop offset=".3" stop-color="#c9cecf"/><stop offset=".65" stop-color="#9da4a5"/><stop offset="1" stop-color="#555c5e"/></linearGradient><linearGradient id="lev" x1="0" y1="0" x2="0" y2="1"><stop offset="0" stop-color="#b8bfc0"/><stop offset=".35" stop-color="#e4e8e8"/><stop offset="1" stop-color="#a9b0b1"/></linearGradient><filter id="tb" x="-20%" y="-20%" width="140%" height="140%"><feGaussianBlur stdDeviation="1.1"/></filter></defs>
<ellipse cx="1530.5" cy="705" rx="11.5" ry="12.5" fill="#0f2233" filter="url(#tb)"/>
<circle cx="1517" cy="700" r="12.2" fill="#35161d"/><circle cx="1516.8" cy="700" r="10.3" fill="url(#lamp)" stroke="#c4262c" stroke-width="1.2"/>
<path d="M1578 706 L1637 716 L1637.5 729 L1625 729.5 L1576 712 Z" fill="#0e2232" filter="url(#tb)"/>
<path d="M1555 681.5 C1560 679.5 1567 679.5 1572 681.5 C1578 684.5 1582 690 1583 695 C1584 699 1584 703 1583 706.5 C1581.5 712 1577.5 717 1572 719.5 C1567 721.5 1560 721.5 1555 719.5 C1549.5 717 1545.5 712 1544.5 706.5 C1543.5 702 1543.5 698 1544.5 694.5 C1546 689 1549.5 684.5 1555 681.5Z" fill="url(#nut)" stroke="#6d7679" stroke-width=".8"/>
<path d="M1572 719.5 C1577.5 717 1581.5 712 1583 706.5 L1575 704 C1573 709 1569 713 1565 714.5Z" fill="#2a2f31" opacity=".7"/>
<ellipse cx="1562.5" cy="700" rx="6.5" ry="8.5" fill="#15181a"/>
<path d="M1564 695.5 L1604 692 L1611 692.5 L1611 709 L1604 709.5 L1566 705.5 Z" fill="url(#lev)"/>
<ellipse cx="1609" cy="700.5" rx="6.8" ry="8.8" fill="#8b8f8e"/>
</svg>
<div class="t" style="left:578.5px;top:749px;transform:scaleX(1.041);">Дистанция сведения</div>
<div class="t" style="right:1417.2px;transform-origin:100% 50%;top:815.7px;">Пулеметы</div>
<div class="fld" style="left:510px;top:810.3px;width:113px;height:45px;background:#72b2cc;"><div class="k" style="left:-1.2px;top:2.4px;">1000.0</div></div>
<div class="t" style="left:630.3px;top:815.7px;">м.</div>
<div class="t" style="right:1417.2px;transform-origin:100% 50%;top:883.3px;">Пушки</div>
<div class="fld" style="left:510px;top:878.2px;width:113px;height:45px;background:#72b2cc;"><div class="k" style="left:-1.2px;top:2.1px;">1000.0</div></div>
<div class="t" style="left:630.3px;top:883.3px;">м.</div>
<div class="t" style="right:1012.8px;transform-origin:100% 50%;top:815.7px;">Ракеты</div>
<div class="fld" style="left:915.2px;top:810.3px;width:113px;height:45px;background:#72b2cc;"><div class="k" style="left:-1.2px;top:2.4px;">1000.0</div></div>
<div class="t" style="left:1035.4px;top:815.7px;">м.</div>
<div class="t" style="right:1012.8px;transform-origin:100% 50%;top:883.3px;">Таймер ракет:</div>
<div class="fld" style="left:915.2px;top:878.2px;width:113px;height:45px;background:#72b2cc;"><div class="k" style="left:-0.7px;top:2.1px;">3.0</div></div>
<div class="t" style="left:1035.6px;top:883.3px;">сек.</div>
<div class="t" style="right:518.5px;transform-origin:100% 50%;top:815.7px;">Таймер бомб:</div>
<div class="fld" style="left:1410.3px;top:810.3px;width:106px;height:45px;background:#72b2cc;"><div class="k" style="left:-0.3px;top:2.4px;">0.0</div></div>
<div class="t" style="left:1523.5px;top:815.7px;">сек.</div>
<div class="t" style="right:517.5px;transform-origin:100% 50%;top:883.3px;">Запас топлива</div>
<div class="fld" style="left:1410.3px;top:878.2px;width:106px;height:45px;"><div class="k" style="left:-1.3px;top:2.1px;">100</div></div>
<div class="dd" style="left:1516.7px;top:878.6px"></div>
<div class="t" style="left:1553px;top:883.3px;font-weight:normal;font-size:17px;">%</div>
<div class="hl" style="left:285px;top:944.6px;width:1353px;height:2.5px;"></div>
<svg style="left:284.8px;top:968.3px" width="72" height="68" viewBox="-34 -34 72 68">
<defs><radialGradient id="bg_red" cx=".38" cy=".36" r=".7"><stop offset="0" stop-color="#ff4a4a"/><stop offset=".35" stop-color="#e2121a"/><stop offset="1" stop-color="#9c0a10"/></radialGradient><linearGradient id="bg_redn" x1="0" y1="0" x2="1" y2="1"><stop offset="0" stop-color="#8c969a"/><stop offset=".3" stop-color="#c6cbcc"/><stop offset=".6" stop-color="#9fa6a7"/><stop offset="1" stop-color="#454b4d"/></linearGradient></defs>
<path d="M14 -10 L29 -8 L33.5 8 L32 18 L20 25 L4 29.5 Z" fill="#0e1d2b" opacity=".8"/>
<path d="M-13 -27.5 C-5 -30 5 -30 12 -27.5 C20 -24 26 -17 27.5 -9 C29.5 -2 29.5 4 27.5 10 C25 18 19 24.5 12 27.5 C5 30 -5 30 -12 27.5 C-20 24 -26 17 -27.5 9 C-29.5 3 -29.5 -4 -27.5 -10 C-25 -18 -20 -24 -13 -27.5Z" fill="url(#bg_redn)" stroke="#6a7478" stroke-width=".8"/>
<path d="M-13 -27.5 L-6 -16 L7 -16 L12 -27.5 M-27.5 -10 L-15 -6 M-27.5 9 L-15 7 M-12 27.5 L-6 17" stroke="#e8ecec" stroke-width="1" opacity=".45" fill="none"/>
<path d="M20 -17 C26 -12 29.5 -3 28.5 6 C27 16 20 24.5 10 28.5 C6 29.5 2 29.5 -1 28.5 L4 18.5 C12 16 17 9 17.5 1 C18 -6 17 -11 14.5 -14Z" fill="#14181b" opacity=".82"/>
<circle cx="0" cy="0" r="17.5" fill="#5a6062"/><circle cx="0" cy="0" r="16.3" fill="none" stroke="#cfd3d3" stroke-width="1.6" stroke-dasharray="1.6 1.2"/>
<circle cx="0.3" cy="-0.3" r="14" fill="url(#bg_red)"/>
<circle cx="-5" cy="-3" r="1.6" fill="#ffd0d0"/>
</svg>
<div class="t" style="left:375.8px;top:985.3px;">Применить</div>
<svg style="left:608.5px;top:968.3px" width="72" height="68" viewBox="-34 -34 72 68">
<defs><radialGradient id="bg_amber" cx=".38" cy=".36" r=".7"><stop offset="0" stop-color="#c8791c"/><stop offset=".35" stop-color="#5d2c09"/><stop offset="1" stop-color="#2d1404"/></radialGradient><linearGradient id="bg_ambern" x1="0" y1="0" x2="1" y2="1"><stop offset="0" stop-color="#8c969a"/><stop offset=".3" stop-color="#c6cbcc"/><stop offset=".6" stop-color="#9fa6a7"/><stop offset="1" stop-color="#454b4d"/></linearGradient></defs>
<path d="M14 -10 L29 -8 L33.5 8 L32 18 L20 25 L4 29.5 Z" fill="#0e1d2b" opacity=".8"/>
<path d="M-13 -27.5 C-5 -30 5 -30 12 -27.5 C20 -24 26 -17 27.5 -9 C29.5 -2 29.5 4 27.5 10 C25 18 19 24.5 12 27.5 C5 30 -5 30 -12 27.5 C-20 24 -26 17 -27.5 9 C-29.5 3 -29.5 -4 -27.5 -10 C-25 -18 -20 -24 -13 -27.5Z" fill="url(#bg_ambern)" stroke="#6a7478" stroke-width=".8"/>
<path d="M-13 -27.5 L-6 -16 L7 -16 L12 -27.5 M-27.5 -10 L-15 -6 M-27.5 9 L-15 7 M-12 27.5 L-6 17" stroke="#e8ecec" stroke-width="1" opacity=".45" fill="none"/>
<path d="M20 -17 C26 -12 29.5 -3 28.5 6 C27 16 20 24.5 10 28.5 C6 29.5 2 29.5 -1 28.5 L4 18.5 C12 16 17 9 17.5 1 C18 -6 17 -11 14.5 -14Z" fill="#14181b" opacity=".82"/>
<circle cx="0" cy="0" r="17.5" fill="#5a6062"/><circle cx="0" cy="0" r="16.3" fill="none" stroke="#cfd3d3" stroke-width="1.6" stroke-dasharray="1.6 1.2"/>
<circle cx="0.3" cy="-0.3" r="14" fill="url(#bg_amber)"/>
<rect x="-7" y="-6" width="5" height="6" fill="#f0a838" opacity=".9"/><rect x="-12.5" y="-5" width="3" height="5" fill="#c98a30" opacity=".8"/><rect x="-1" y="10" width="4" height="3" fill="#d08a2c" opacity=".8"/>
</svg>
<div class="t" style="left:696.5px;top:985.3px;">Джойстик</div>
</body>
</html>
